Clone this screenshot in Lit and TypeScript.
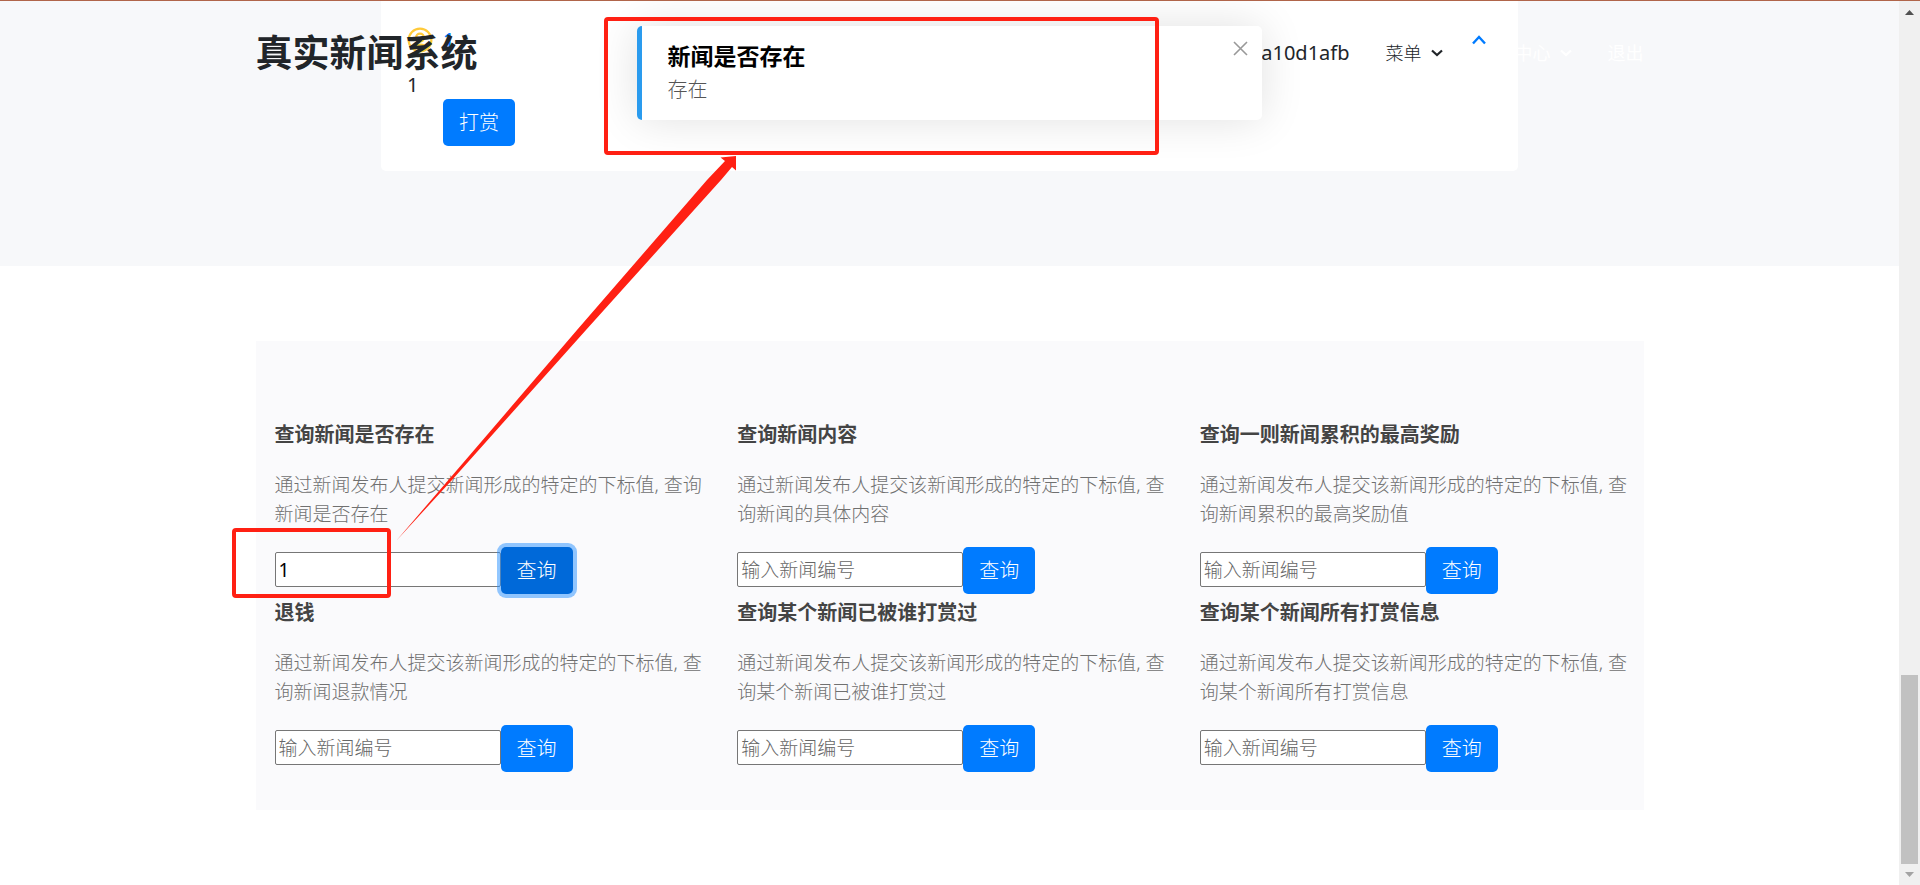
import { LitElement, html, css, svg } from "lit";
import { customElement } from "lit/decorators.js";
import { classMap } from "lit/directives/class-map.js";

interface Query {
  id: string;
  title: string;
  text: string;
  value?: string;
  focused?: boolean;
}

const QUERIES: Query[] = [
  { id: "exists", title: "查询新闻是否存在", text: "通过新闻发布人提交新闻形成的特定的下标值, 查询新闻是否存在", value: "1", focused: true },
  { id: "content", title: "查询新闻内容", text: "通过新闻发布人提交该新闻形成的特定的下标值, 查询新闻的具体内容" },
  { id: "highest", title: "查询一则新闻累积的最高奖励", text: "通过新闻发布人提交该新闻形成的特定的下标值, 查询新闻累积的最高奖励值" },
  { id: "refund", title: "退钱", text: "通过新闻发布人提交该新闻形成的特定的下标值, 查询新闻退款情况" },
  { id: "donors", title: "查询某个新闻已被谁打赏过", text: "通过新闻发布人提交该新闻形成的特定的下标值, 查询某个新闻已被谁打赏过" },
  { id: "rewards", title: "查询某个新闻所有打赏信息", text: "通过新闻发布人提交该新闻形成的特定的下标值, 查询某个新闻所有打赏信息" },
];

const chevron = svg`<path d="M1 1.5 L6 6 L11 1.5" fill="none" stroke="currentColor" stroke-width="2.2"/>`;

@customElement("app-root")
export class AppRoot extends LitElement {
  static styles = css`
    :host {
      display: block;
      position: relative;
      height: 100vh;
      overflow: hidden;
      box-sizing: border-box;
      border-top: 1px solid #b0654a;
      background: #fff;
      color: #212529;
      font-family: "Noto Sans", "Noto Sans CJK SC", sans-serif;
      font-size: 20px;
      line-height: 28px;
    }
    * { box-sizing: border-box; }
    h1, h2, h3, p { margin: 0; }
    a { color: inherit; text-decoration: none; }
    button, input { font-family: inherit; }
    .frame { display: flex; height: 100%; }
    .page { flex: 1; min-width: 0; position: relative; }
    .container { width: 100%; max-width: 1388px; margin: 0 auto; }

    .header { position: absolute; top: 0; left: 0; right: 0; z-index: 2; }
    .bar { display: flex; align-items: center; padding: 23px 0; line-height: 58px; }
    .brand { font-size: 37px; font-weight: 700; margin-right: auto; }
    .nav { display: flex; gap: 36px; align-items: center; }
    .link { display: flex; align-items: center; gap: 9px; font-size: 18px; font-weight: 300; }
    .link svg { width: 12px; height: 8px; }
    .pale { color: #fff; font-weight: 400; }
    .center { margin-left: 36px; }

    .top { background: #f7f8fa; padding-bottom: 95px; }
    .card {
      max-width: 1137px;
      margin: 0 auto;
      padding: 24px 32px 25px 26px;
      background: #fff;
      border-radius: 0 0 5px 5px;
    }
    .summary { display: flex; align-items: center; gap: 10px; height: 30px; margin-bottom: 16px; }
    .coin { width: 26px; height: 26px; }
    .count { color: #007bff; font-weight: 500; }
    .collapse {
      margin-left: auto;
      padding: 0;
      border: 0;
      background: none;
      color: #007bff;
      display: flex;
    }
    .collapse svg { width: 14px; height: 10px; }
    .btn {
      display: block;
      height: 47px;
      width: 72px;
      padding: 0;
      border: 0;
      border-radius: 5px;
      background: #007bff;
      color: #fff;
      font-size: 20px;
      font-weight: 300;
      line-height: 47px;
    }
    .reward { margin-left: 36px; }
    .active { background: #0069d9; box-shadow: 0 0 0 4px rgba(38, 143, 255, 0.5); }

    .tools { padding-top: 75px; }
    .panel {
      display: grid;
      grid-template-columns: repeat(3, 1fr);
      row-gap: 7px;
      padding: 82px 0 38px;
      background: #fafafc;
    }
    .query { padding: 0 14px 0 19px; }
    .title { font-size: 20px; font-weight: 700; line-height: 24px; color: #444; margin-bottom: 24px; }
    .text { font-size: 19px; font-weight: 300; line-height: 29px; color: #707070; margin-bottom: 18px; min-height: 58px; }
    .row { display: flex; align-items: center; }
    .field {
      width: 226px;
      height: 35px;
      margin: 0 0 2px;
      padding: 0 3px;
      border: 1px solid #767676;
      border-radius: 2px;
      background: #fff;
      color: #000;
      font-size: 19px;
      font-weight: 400;
      outline: 0;
    }
    .field::placeholder { color: #666; opacity: 1; font-weight: 300; }

    .toast {
      position: absolute;
      z-index: 3;
      top: 25px;
      left: 50%;
      width: 625px;
      margin-left: -313px;
      min-height: 94px;
      padding: 15px 14px 13px 26px;
      display: flex;
      align-items: flex-start;
      justify-content: space-between;
      background: #fff;
      border-left: 5px solid #2a9bee;
      border-radius: 5px;
      box-shadow: 0 0 44px rgba(0, 0, 0, 0.12);
    }
    .toast-title { font-size: 23px; font-weight: 700; line-height: 30px; color: #000; margin-bottom: 2px; }
    .toast-text { font-weight: 300; line-height: 34px; color: #555; }
    .close { padding: 0; border: 0; background: none; color: #999; display: flex; }
    .close svg { width: 15px; height: 15px; }

    .scroll {
      width: 21px;
      background: #f0f0f0;
      display: flex;
      flex-direction: column;
      align-items: center;
      padding: 9px 0 8px;
    }
    .scroll svg { width: 9px; height: 5px; }
    .track { flex: 1; width: 17px; display: flex; flex-direction: column; justify-content: flex-end; padding-bottom: 8px; }
    .thumb { height: 189px; background: #c1c1c1; }

    .marks { position: absolute; z-index: 4; top: -1px; left: 0; width: 1200px; height: 640px; pointer-events: none; }
  `;

  private renderQuery(q: Query) {
    return html`
      <article class="query">
        <h3 class="title"><label for=${q.id}>${q.title}</label></h3>
        <p class="text">${q.text}</p>
        <div class="row">
          <input class="field" id=${q.id} type="text" placeholder="输入新闻编号" .value=${q.value ?? ""} />
          <button class=${classMap({ btn: true, active: !!q.focused })} type="button">查询</button>
        </div>
      </article>
    `;
  }

  render() {
    return html`
      <div class="frame">
        <div class="page">
          <header class="header">
            <div class="container bar">
              <h1 class="brand">真实新闻系统</h1>
              <nav class="nav">
                <span>a10d1afb</span>
                <a class="link" href="#menu">菜单 <svg viewBox="0 0 12 8">${chevron}</svg></a>
                <a class="link pale center" href="#center">中心 <svg viewBox="0 0 12 8">${chevron}</svg></a>
                <a class="link pale" href="#exit">退出</a>
              </nav>
            </div>
          </header>

          <section class="top">
            <div class="card">
              <div class="summary">
                <svg class="coin" viewBox="0 0 26 26" fill="none" stroke="#ffca3a" stroke-width="2.2">
                  <circle cx="13" cy="13" r="11.4" />
                  <circle cx="13" cy="10.6" r="4" />
                  <path d="M5.5 21 C8 16.5 18 16.5 20.500 21" />
                </svg>
                <span class="count">1</span>
                <button class="collapse" type="button" aria-label="收起">
                  <svg viewBox="0 0 14 10"><path d="M1 8.500 L7 2 L13 8.500" fill="none" stroke="currentColor" stroke-width="2.4" /></svg>
                </button>
              </div>
              <p>1</p>
              <button class="btn reward" type="button">打赏</button>
            </div>
          </section>

          <main class="tools">
            <div class="container panel">${QUERIES.map((q) => this.renderQuery(q))}</div>
          </main>

          <aside class="toast" role="status">
            <div>
              <h2 class="toast-title">新闻是否存在</h2>
              <p class="toast-text">存在</p>
            </div>
            <button class="close" type="button" aria-label="关闭">
              <svg viewBox="0 0 15 15"><path d="M1 1 L14 14 M14 1 L1 14" stroke="currentColor" stroke-width="1.6" /></svg>
            </button>
          </aside>

          <svg class="marks" viewBox="0 0 1200 640" aria-hidden="true">
            <g fill="none" stroke="#ff2013" stroke-width="4">
              <rect x="606" y="19" width="551" height="134" rx="2" />
              <rect x="234" y="530" width="155" height="66" rx="2" />
            </g>
            <path fill="#ff2013" d="M396.500 540.500 L577 330 L707 180 L725 161 L720.500 157.500 L736 156 L736 170.500 L732 167 L721 180 L586 330 L452 480 Z" />
          </svg>
        </div>
        <div class="scroll" aria-hidden="true">
          <svg viewBox="0 0 9 5"><path d="M0 5 L4.500 0 L9 5 Z" fill="#505050" /></svg>
          <div class="track"><div class="thumb"></div></div>
          <svg viewBox="0 0 9 5"><path d="M0 0 L4.500 5 L9 0 Z" fill="#a3a3a3" /></svg>
        </div>
      </div>
    `;
  }
}
